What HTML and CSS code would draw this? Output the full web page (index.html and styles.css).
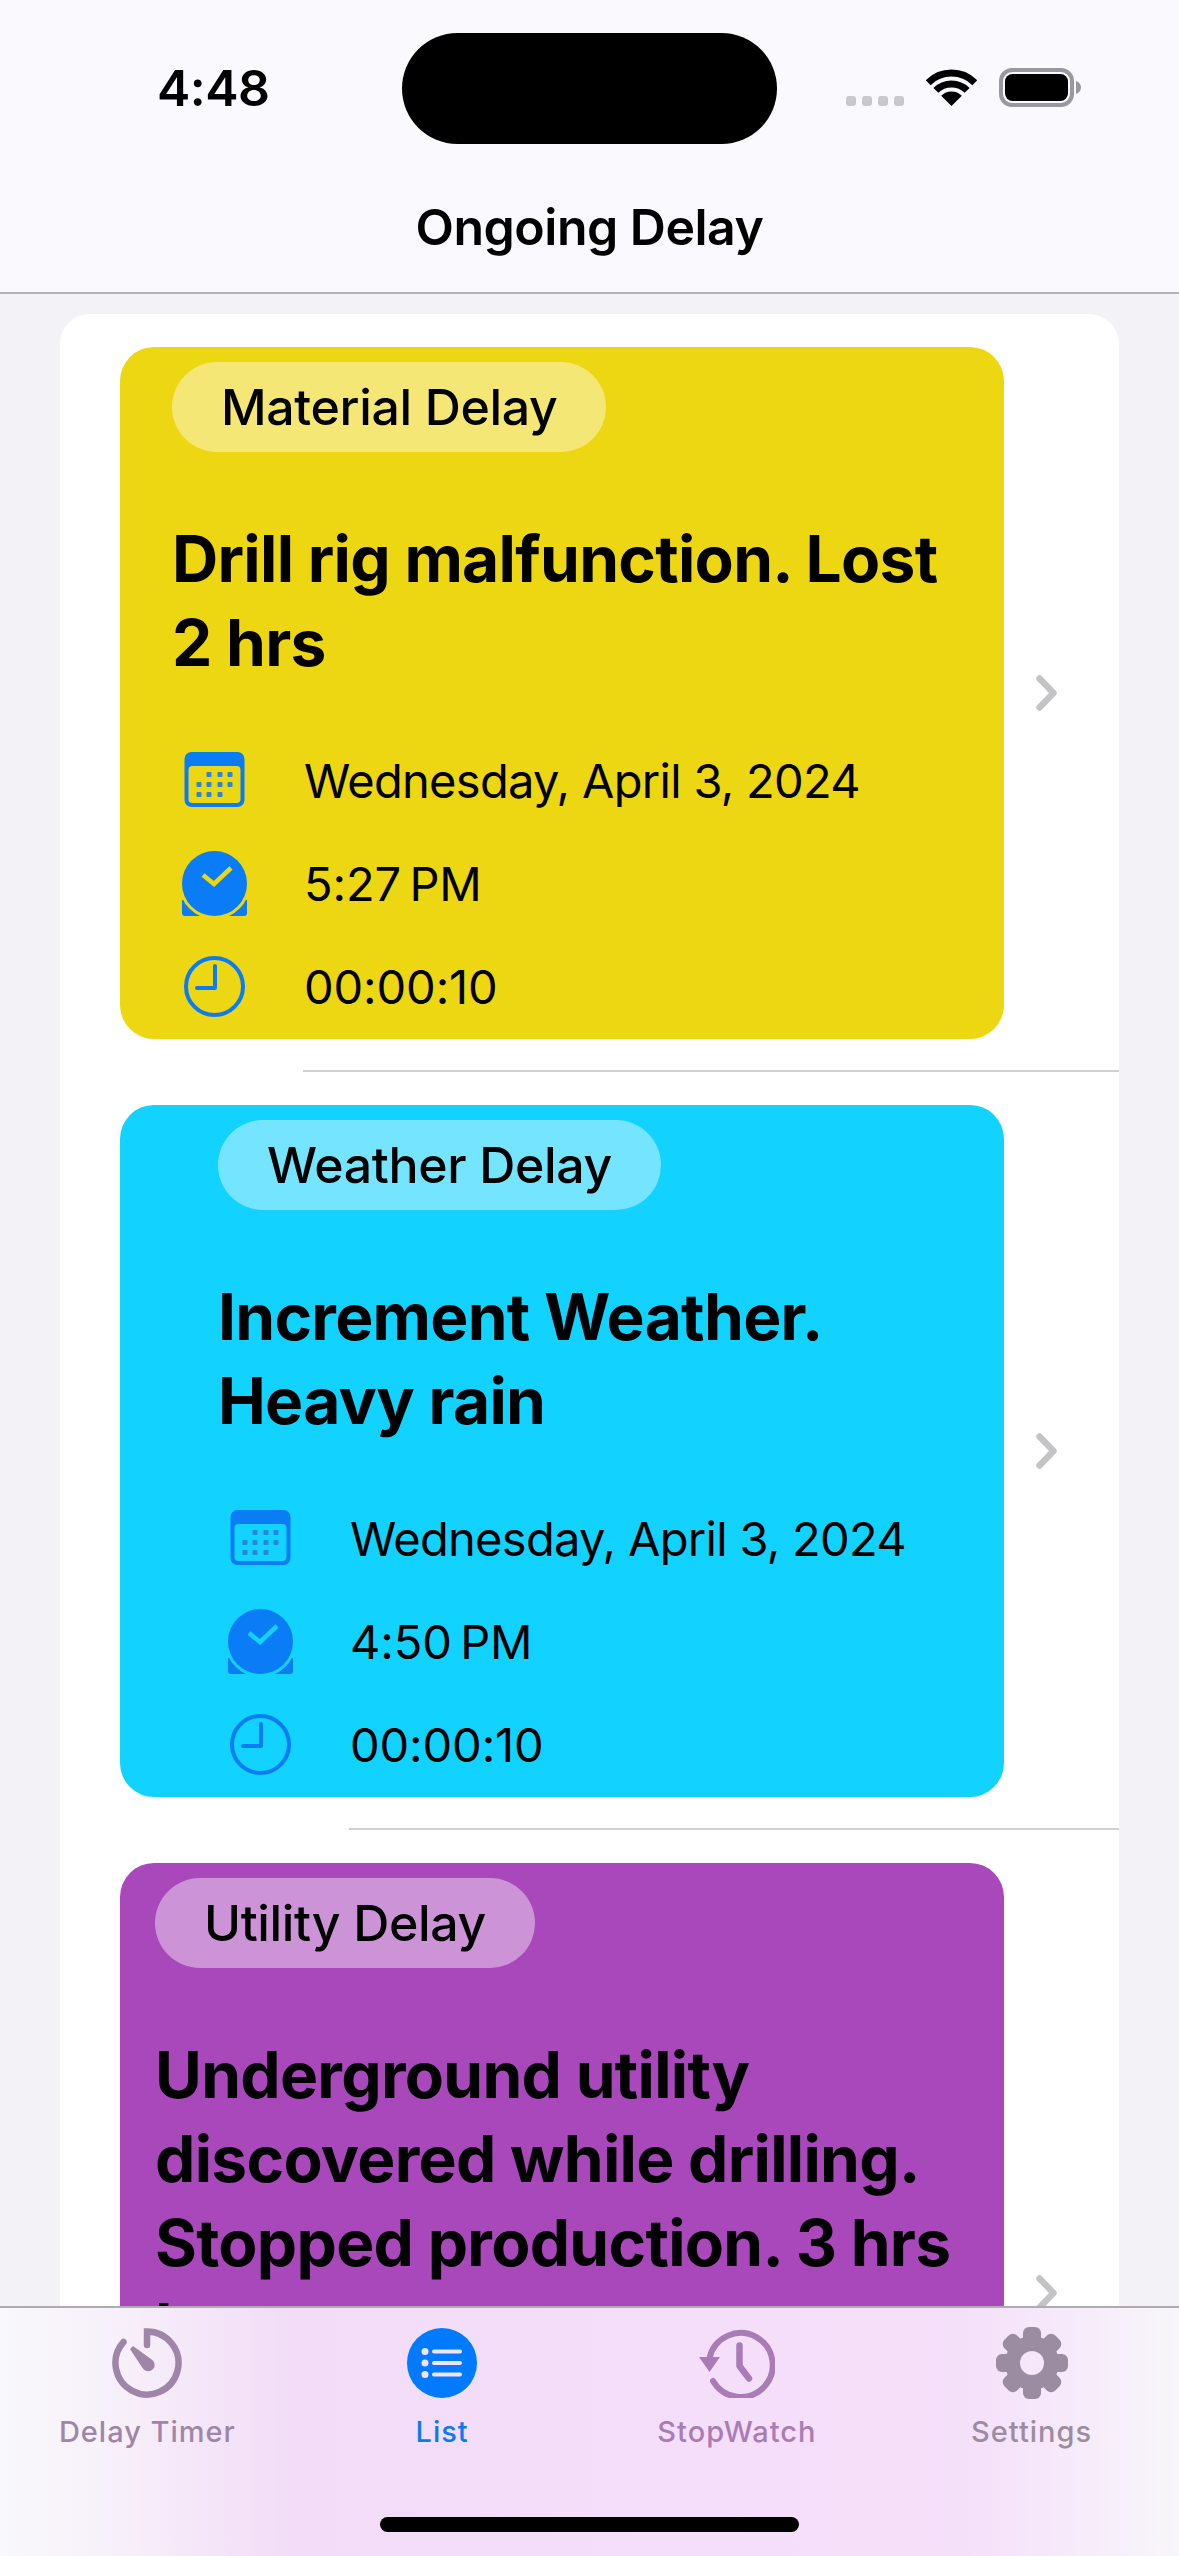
FILE: index.html
```html
<!DOCTYPE html>
<html lang="en">
<head>
    <meta charset="UTF-8">
    <meta name="viewport" content="width=device-width, initial-scale=1.0">
    <title>Ongoing Delay</title>
    <link rel="stylesheet" href="styles.css">
</head>
<body>
    <svg class="icon-defs" width="0" height="0" aria-hidden="true">
        <defs>
            <symbol id="icon-calendar" viewBox="-2.500 -4 65 65">
                <path d="M7 0H53A7 7 0 0 1 60 7V48A7 7 0 0 1 53 55H7A7 7 0 0 1 0 48V7A7 7 0 0 1 7 0ZM8 14A4 4 0 0 0 4 18V47A4 4 0 0 0 8 51H52A4 4 0 0 0 56 47V18A4 4 0 0 0 52 14Z" fill-rule="evenodd" fill="#0a7cf5"></path>
                <g fill="#2b86d6">
                    <rect x="22" y="20" width="5" height="5" rx="1"></rect>
                    <rect x="33" y="20" width="5" height="5" rx="1"></rect>
                    <rect x="43" y="20" width="5" height="5" rx="1"></rect>
                    <rect x="12" y="30" width="5" height="5" rx="1"></rect>
                    <rect x="22" y="30" width="5" height="5" rx="1"></rect>
                    <rect x="33" y="30" width="5" height="5" rx="1"></rect>
                    <rect x="43" y="30" width="5" height="5" rx="1"></rect>
                    <rect x="12" y="40" width="5" height="5" rx="1"></rect>
                    <rect x="22" y="40" width="5" height="5" rx="1"></rect>
                    <rect x="33" y="40" width="5" height="5" rx="1"></rect>
                </g>
            </symbol>
            <symbol id="icon-check-clock" viewBox="0 0 65 65">
                <path d="M0 49H65V62A3 3 0 0 1 62 65H3A3 3 0 0 1 0 62Z" fill="#0a7cf5"></path>
                <circle class="ring" cx="32.500" cy="32.500" r="34" stroke-width="3"></circle>
                <circle cx="32.500" cy="32.500" r="32.500" fill="#0a7cf5"></circle>
                <path class="tick" d="M21 24L32 33L49 17" stroke-width="4.500"></path>
            </symbol>
            <symbol id="icon-clock" viewBox="-2 -2 65 65">
                <circle cx="30.500" cy="30.500" r="28.500" fill="none" stroke="#0a7cf5" stroke-width="4"></circle>
                <path d="M31 10V32H13" fill="none" stroke="#0a7cf5" stroke-width="4" stroke-linecap="round" stroke-linejoin="round"></path>
            </symbol>
            <symbol id="icon-chevron" viewBox="0 0 21 36">
                <path d="M3.500 3.500L17.500 18L3.500 32.500" fill="none" stroke="#c4c4c6" stroke-width="6.500" stroke-linecap="round" stroke-linejoin="round"></path>
            </symbol>
        </defs>
    </svg>

    <header class="top-bar">
        <div class="status-bar">
            <span class="status-time">4:48</span>
            <div class="status-icons">
                <div class="signal-dots"><i></i><i></i><i></i><i></i></div>
                <svg class="wifi" viewBox="0 0 51 37">
                    <path d="M2.200 13.700A33 33 0 0 1 48.800 13.700M9.900 21.400A22 22 0 0 1 41.100 21.400" fill="none" stroke="#000" stroke-width="7"></path>
                    <path d="M25.500 37L15.200 26.700A14.500 14.500 0 0 1 35.800 26.700Z" fill="#000"></path>
                </svg>
                <svg class="battery" viewBox="0 0 82 39">
                    <rect x="2" y="2" width="71" height="35" rx="11" fill="none" stroke="#98989e" stroke-width="4"></rect>
                    <rect x="6" y="6" width="63" height="27" rx="7.500" fill="#000"></rect>
                    <path d="M77 13C80 14 82 16.500 82 19.500C82 22.500 80 25 77 26Z" fill="#98989e"></path>
                </svg>
            </div>
        </div>
        <div class="island"></div>
        <h1 class="nav-title">Ongoing Delay</h1>
    </header>

    <main class="content">
        <ul class="delay-list">
            <li class="delay-row">
                <article class="delay-card delay-card--material">
                    <span class="delay-tag">Material Delay</span>
                    <h2 class="delay-title">Drill rig malfunction. Lost 2&nbsp;hrs</h2>
                    <div class="delay-meta">
                        <svg class="meta-icon"><use href="#icon-calendar"></use></svg>
                        <span>Wednesday, April 3, 2024</span>
                    </div>
                    <div class="delay-meta delay-meta--time">
                        <svg class="meta-icon"><use href="#icon-check-clock"></use></svg>
                        <span>5:27&#8201;PM</span>
                    </div>
                    <div class="delay-meta delay-meta--time">
                        <svg class="meta-icon"><use href="#icon-clock"></use></svg>
                        <span>00:00:10</span>
                    </div>
                </article>
                <svg class="chevron"><use href="#icon-chevron"></use></svg>
            </li>
            <li class="delay-row delay-row--weather">
                <article class="delay-card delay-card--weather">
                    <span class="delay-tag">Weather Delay</span>
                    <h2 class="delay-title">Increment Weather. Heavy rain</h2>
                    <div class="delay-meta">
                        <svg class="meta-icon"><use href="#icon-calendar"></use></svg>
                        <span>Wednesday, April 3, 2024</span>
                    </div>
                    <div class="delay-meta delay-meta--time">
                        <svg class="meta-icon"><use href="#icon-check-clock"></use></svg>
                        <span>4:50&#8201;PM</span>
                    </div>
                    <div class="delay-meta delay-meta--time">
                        <svg class="meta-icon"><use href="#icon-clock"></use></svg>
                        <span>00:00:10</span>
                    </div>
                </article>
                <svg class="chevron"><use href="#icon-chevron"></use></svg>
            </li>
            <li class="delay-row">
                <article class="delay-card delay-card--utility">
                    <span class="delay-tag">Utility Delay</span>
                    <h2 class="delay-title">Underground utility discovered while drilling. Stopped production. 3 hrs lost</h2>
                </article>
                <svg class="chevron"><use href="#icon-chevron"></use></svg>
            </li>
        </ul>
    </main>

    <nav class="tab-bar">
        <div class="tab tab--timer">
            <svg class="tab-icon" viewBox="0 0 70 70">
                <path d="M35 17V3.500A31.500 31.500 0 1 1 11.500 14" fill="none" stroke="currentColor" stroke-width="6.500" stroke-linecap="round"></path>
                <path d="M18 21L21 18L39 31A6.500 6.500 0 1 1 30.500 40Z" fill="currentColor"></path>
            </svg>
            <span>Delay Timer</span>
        </div>
        <div class="tab tab--active">
            <svg class="tab-icon" viewBox="0 0 70 70">
                <circle cx="35" cy="35" r="35" fill="#007aff"></circle>
                <g fill="#f3e2fb">
                    <circle cx="18" cy="23.500" r="3.500"></circle>
                    <circle cx="18" cy="35" r="3.500"></circle>
                    <circle cx="18" cy="46.500" r="3.500"></circle>
                    <rect x="25" y="21.500" width="30" height="4" rx="2"></rect>
                    <rect x="25" y="33" width="30" height="4" rx="2"></rect>
                    <rect x="25" y="44.500" width="30" height="4" rx="2"></rect>
                </g>
            </svg>
            <span>List</span>
        </div>
        <div class="tab tab--stopwatch">
            <svg class="tab-icon tab-icon--wide" viewBox="0 0 76 70">
                <path d="M10.500 30A32 32 0 1 1 14 53" fill="none" stroke="currentColor" stroke-width="6" stroke-linecap="round"></path>
                <path d="M0 29H21L10.500 44Z" fill="currentColor"></path>
                <path d="M40.500 17.500V38L50 50.500" fill="none" stroke="currentColor" stroke-width="6.500" stroke-linecap="round" stroke-linejoin="round"></path>
            </svg>
            <span>StopWatch</span>
        </div>
        <div class="tab tab--settings">
            <svg class="tab-icon tab-icon--gear" viewBox="0 0 72 72">
                <defs>
                    <mask id="gear-hole">
                        <rect width="72" height="72" fill="#fff"></rect>
                        <circle cx="36" cy="36" r="12" fill="#000"></circle>
                    </mask>
                </defs>
                <g fill="currentColor" mask="url(#gear-hole)">
                    <circle cx="36" cy="36" r="27"></circle>
                    <rect x="27" y="0" width="18" height="72" rx="6"></rect>
                    <rect x="27" y="0" width="18" height="72" rx="6" transform="rotate(45 36 36)"></rect>
                    <rect x="27" y="0" width="18" height="72" rx="6" transform="rotate(90 36 36)"></rect>
                    <rect x="27" y="0" width="18" height="72" rx="6" transform="rotate(135 36 36)"></rect>
                </g>
            </svg>
            <span>Settings</span>
        </div>
        <div class="home-indicator"></div>
    </nav>
</body>
</html>
```

FILE: styles.css
```css
* {
    box-sizing: border-box;
}
body {
    font-family: 'Inter', 'Liberation Sans', sans-serif;
    display: flex;
    flex-direction: column;
    width: 1179px;
    height: 2556px;
    margin: 0;
    background-color: #f2f2f7;
    color: #000;
    overflow: hidden;
    position: relative;
}
.icon-defs {
    position: absolute;
}

/* top bar */
.top-bar {
    height: 294px;
    flex-shrink: 0;
    background-color: #f9f9fe;
    border-bottom: 2px solid #b4b4b6;
    position: relative;
}
.status-bar {
    display: flex;
    justify-content: space-between;
    height: 174px;
    padding: 60px 98px 0 157px;
}
.status-time {
    font-size: 50px;
    font-weight: 600;
    line-height: 56px;
    letter-spacing: -0.5px;
}
.status-icons {
    display: flex;
    align-items: flex-start;
    margin-top: 8px;
}
.signal-dots {
    display: flex;
    gap: 6px;
    margin-top: 28px;
    margin-right: 22px;
}
.signal-dots i {
    width: 10px;
    height: 10px;
    border-radius: 3px;
    background-color: #c9c9cc;
}
.wifi {
    width: 51px;
    height: 37px;
    margin-top: 1px;
    margin-right: 22px;
}
.battery {
    width: 82px;
    height: 39px;
}
.island {
    position: absolute;
    left: 402px;
    top: 33px;
    width: 375px;
    height: 111px;
    border-radius: 56px;
    background-color: #000;
}
.nav-title {
    margin: 24px 0 0;
    font-size: 50px;
    font-weight: 600;
    line-height: 58px;
    text-align: center;
    letter-spacing: -0.5px;
}

/* list */
.content {
    flex: 1;
    min-height: 0;
    overflow: hidden;
    padding: 20px 60px 0;
}
.delay-list {
    list-style: none;
    margin: 0;
    padding: 0;
    background-color: #fff;
    border-radius: 30px;
}
.delay-row {
    display: flex;
    align-items: center;
    padding: 33px 0 33px 60px;
    position: relative;
}
.delay-row::after {
    content: "";
    position: absolute;
    right: 0;
    bottom: 0;
    left: 243px;
    height: 2px;
    background-color: #d0d0d2;
}
.delay-row--weather::after {
    left: 289px;
}
.delay-row:last-child::after {
    display: none;
}
.delay-card {
    --card-bg: #edd612;
    width: 884px;
    min-height: 692px;
    flex-shrink: 0;
    padding: 15px 52px 0;
    border-radius: 34px;
    background-color: var(--card-bg);
}
.delay-card--weather {
    --card-bg: #12d2ff;
    padding-left: 98px;
    padding-right: 98px;
}
.delay-card--utility {
    --card-bg: #a848bb;
    min-height: 860px;
    padding-left: 35px;
    padding-right: 30px;
}
.delay-tag {
    display: inline-block;
    height: 90px;
    padding: 0 49px;
    border-radius: 45px;
    background-color: rgba(255, 255, 255, 0.42);
    font-size: 50px;
    font-weight: 500;
    line-height: 90px;
    letter-spacing: -0.35px;
}
.delay-title {
    margin: 65px 0 44px;
    font-size: 64px;
    font-weight: 700;
    line-height: 84px;
    letter-spacing: -0.7px;
}
.delay-meta {
    display: flex;
    align-items: center;
    gap: 57px;
    height: 103px;
    font-size: 47px;
    letter-spacing: -0.7px;
    white-space: nowrap;
}
.delay-meta--time {
    letter-spacing: -0.1px;
}
.meta-icon {
    width: 65px;
    height: 65px;
    flex-shrink: 0;
    margin-left: 10px;
}
.ring {
    fill: var(--card-bg);
    stroke: var(--card-bg);
}
.tick {
    fill: none;
    stroke: var(--card-bg);
}
.chevron {
    width: 21px;
    height: 36px;
    flex-shrink: 0;
    margin-left: 32px;
}

/* tab bar */
.tab-bar {
    display: grid;
    grid-template-columns: repeat(4, 1fr);
    height: 250px;
    flex-shrink: 0;
    padding-top: 20px;
    background: linear-gradient(90deg, #f9f8fb 0%, #f7f0fa 10%, #f2dcf7 25%, #f5def9 60%, #f5e0fa 82%, #f8f6fa 100%);
    border-top: 2px solid #b0aab2;
    position: relative;
}
.tab {
    display: flex;
    flex-direction: column;
    align-items: center;
    font-size: 29px;
    font-weight: 500;
    letter-spacing: 1px;
    line-height: 34px;
}
.tab--timer {
    color: #9f86a9;
}
.tab--active {
    color: #0a7aee;
}
.tab--stopwatch {
    color: #a97cb5;
}
.tab--settings {
    color: #9c8ca1;
}
.tab-icon {
    width: 72px;
    height: 70px;
    margin-bottom: 17px;
}
.tab-icon--wide {
    width: 76px;
}
.tab-icon--gear {
    height: 72px;
    margin-top: -1px;
    margin-bottom: 16px;
}
.home-indicator {
    position: absolute;
    left: 380px;
    bottom: 24px;
    width: 419px;
    height: 15px;
    border-radius: 8px;
    background-color: #000;
}
```
